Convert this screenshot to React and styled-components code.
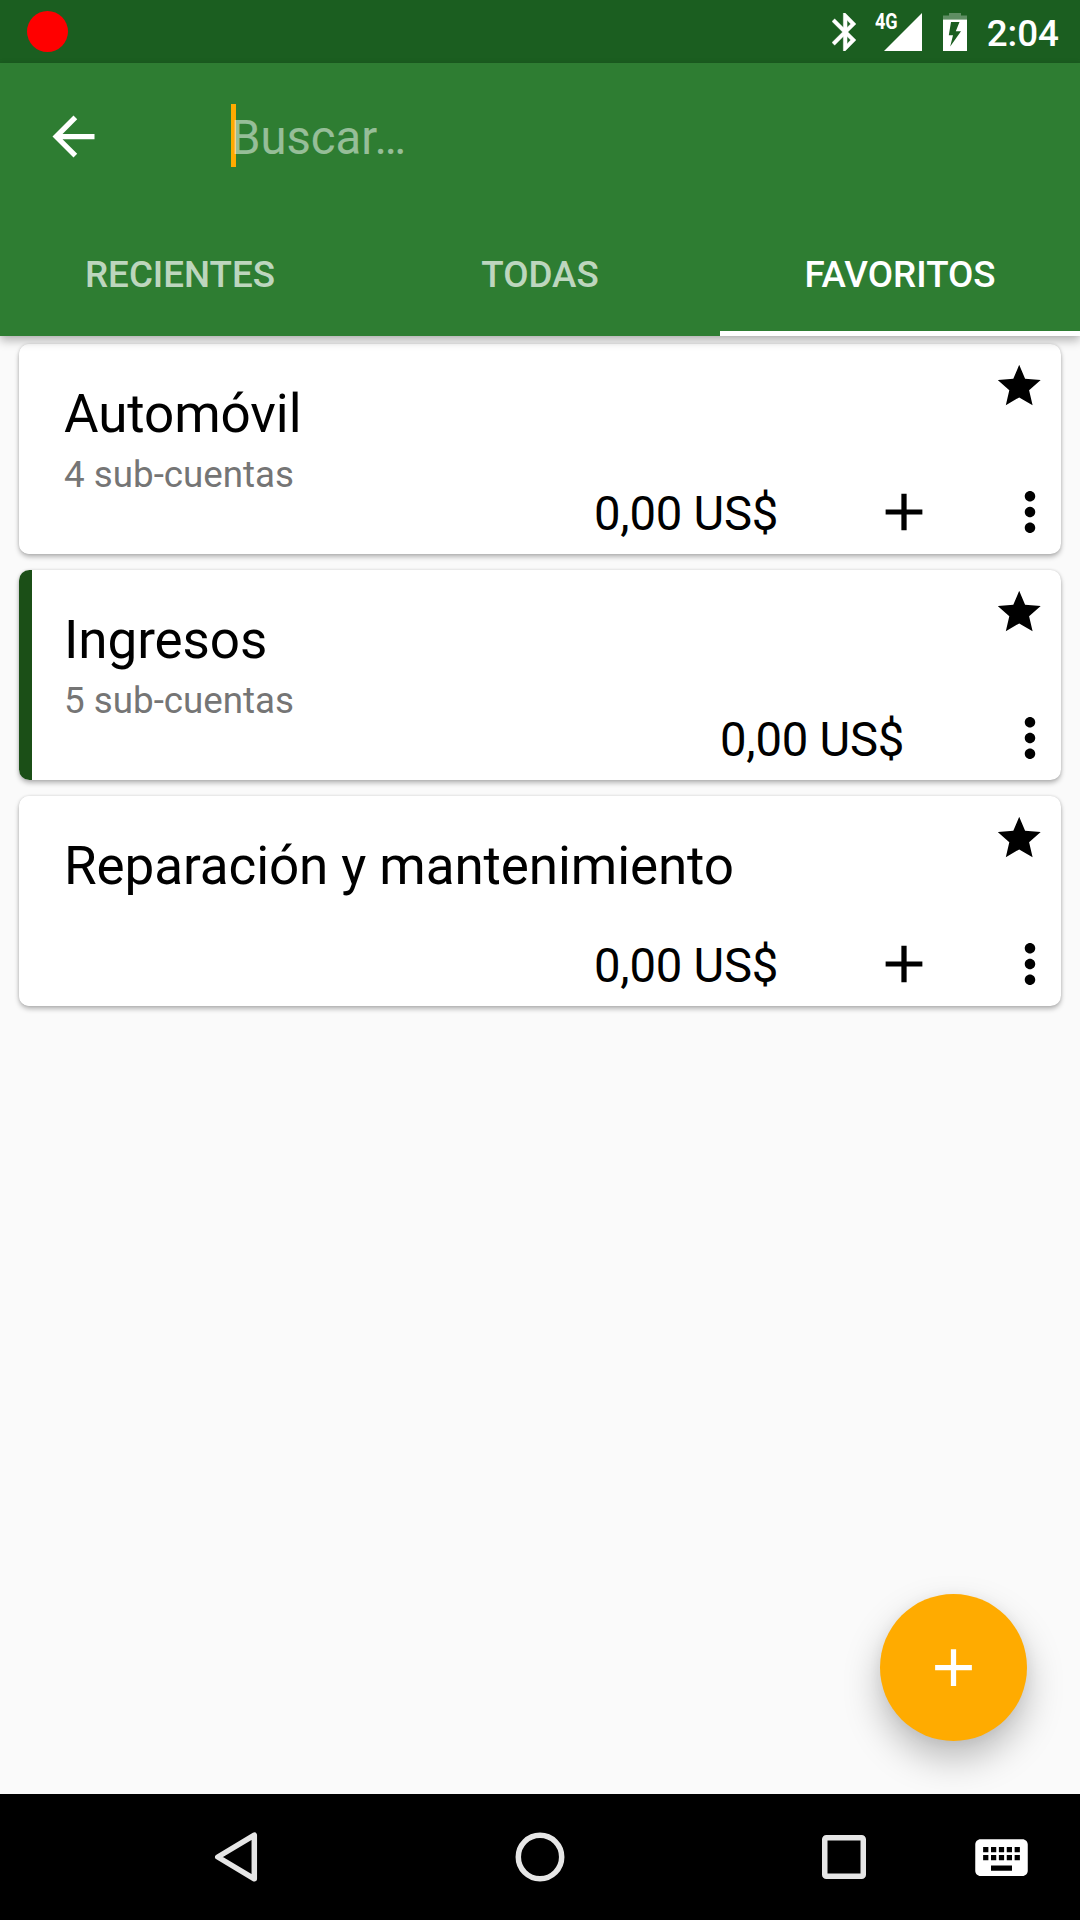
import React from "react";
import styled, { createGlobalStyle } from "styled-components";

const GlobalStyle = createGlobalStyle`
  * { box-sizing: border-box; }
  body { margin: 0; background: #fafafa; }
  svg { display: block; flex: none; }
  button { border: 0; padding: 0; background: none; color: inherit; font: inherit; }
`;

const Screen = styled.div`
  position: relative;
  display: flex;
  flex-direction: column;
  width: 1080px;
  height: 1920px;
  overflow: hidden;
  background: #fafafa;
  color: #000;
  font-family: Roboto, "Liberation Sans", sans-serif;
`;

const StatusBar = styled.div`
  display: flex;
  align-items: center;
  height: 63px;
  padding: 0 21px 0 27px;
  background: #1b5e20;
  color: #fff;
`;

const RecordDot = styled.div`
  width: 41px;
  height: 41px;
  margin-right: auto;
  border-radius: 50%;
  background: #f00;
`;

const Signal = styled.div`
  position: relative;
  margin: 1px 21px 0 28px;
`;

const NetworkLabel = styled.span`
  position: absolute;
  left: -9px;
  top: 0;
  font-size: 22px;
  font-weight: 700;
  line-height: 18px;
  transform: scaleX(0.82);
  transform-origin: left center;
`;

const Clock = styled.div`
  margin: 3px 0 0 20px;
  font-size: 36.75px;
  font-weight: 500;
  line-height: 43px;
`;

const AppBar = styled.header`
  position: relative;
  z-index: 1;
  height: 273px;
  background: #2e7d32;
  color: #fff;
  box-shadow: 0 5px 9px rgba(0, 0, 0, 0.26), 0 0 3px rgba(0, 0, 0, 0.08);
`;

const Toolbar = styled.div`
  display: flex;
  align-items: center;
  height: 147px;
  padding-left: 42px;
`;

const SearchField = styled.div`
  display: flex;
  align-items: center;
  margin-left: 126px;
`;

const Caret = styled.span`
  width: 5px;
  height: 63px;
  margin-bottom: 3px;
  background: #ffab00;
`;

const Placeholder = styled.span`
  margin-left: -5px;
  padding-top: 4px;
  color: rgba(255, 255, 255, 0.5);
  font-size: 47.25px;
  line-height: 55px;
`;

const Tabs = styled.nav`
  display: grid;
  grid-template-columns: repeat(3, 1fr);
  height: 126px;
`;

const Tab = styled.button`
  padding-top: 7px;
  border-bottom: 5px solid ${(p) => (p.$active ? "#fff" : "transparent")};
  color: ${(p) => (p.$active ? "#fff" : "rgba(255, 255, 255, 0.7)")};
  font-size: 36.75px;
  font-weight: 500;
  line-height: 43px;
`;

const AccountList = styled.main`
  display: flex;
  flex: 1;
  flex-direction: column;
  gap: 16px;
  padding: 8px 19px;
`;

const Card = styled.article`
  display: flex;
  height: 210px;
  overflow: hidden;
  border-radius: 10.5px;
  background: #fff;
  box-shadow: 0 3px 5px rgba(0, 0, 0, 0.27), 0 0 3px rgba(0, 0, 0, 0.14);
`;

const Stripe = styled.div`
  width: 13px;
  background: ${(p) => p.$color};
`;

const CardBody = styled.div`
  display: flex;
  flex: 1;
  flex-direction: column;
`;

const CardHead = styled.div`
  display: flex;
  justify-content: space-between;
  height: 152px;
  padding: 39px 20px 0 32px;
`;

const Title = styled.h2`
  margin: 0 0 8px;
  padding-top: 1px;
  font-size: 53px;
  font-weight: 400;
  letter-spacing: -0.1px;
  line-height: 61px;
`;

const Subtitle = styled.p`
  margin: 0;
  color: #757575;
  font-size: 36.75px;
  line-height: 43px;
`;

const StarButton = styled.button`
  align-self: flex-start;
  margin-top: -18px;
`;

const CardFoot = styled.div`
  display: flex;
  align-items: center;
  justify-content: flex-end;
  height: 58px;
  padding-bottom: 26px;
`;

const Amount = styled.div`
  margin: 4px 95px 0 0;
  font-size: 47.25px;
  letter-spacing: -0.25px;
  line-height: 55px;
`;

const AddButton = styled.button`
  margin-right: 64px;
`;

const Fab = styled.button`
  position: absolute;
  right: 53px;
  bottom: 179px;
  display: grid;
  place-items: center;
  width: 147px;
  height: 147px;
  border-radius: 50%;
  background: #ffab00;
  color: #fff;
  box-shadow: 0 18px 36px rgba(0, 0, 0, 0.25), 0 2px 14px rgba(0, 0, 0, 0.05);
`;

const NavBar = styled.footer`
  position: relative;
  display: flex;
  align-items: center;
  height: 126px;
  padding: 0 46px 0 212px;
  background: #000;
  color: #e6e6e6;
`;

const NavButton = styled.button`
  margin-right: ${(p) => p.$gap || 0}px;
  color: ${(p) => p.$color || "inherit"};
`;

const MaterialIcon = ({ d }) => (
  <svg width="63" height="63" viewBox="0 0 24 24" fill="currentColor">
    <path d={d} />
  </svg>
);

const CardIcon = ({ d }) => (
  <svg width="62" height="62" viewBox="0.19 0.19 23.62 23.62" fill="currentColor">
    <path d={d} />
  </svg>
);

const BACK = "M20 11H7.83l5.59-5.59L12 4l-8 8 8 8 1.41-1.41L7.83 13H20v-2z";
const PLUS = "M19 13h-6v6h-2v-6H5v-2h6V5h2v6h6v2z";
const MORE =
  "M12 8c1.1 0 2-.9 2-2s-.9-2-2-2-2 .9-2 2 .9 2 2 2zm0 2c-1.1 0-2 .9-2 2s.9 2 2 2 2-.9 2-2-.9-2-2-2zm0 6c-1.1 0-2 .9-2 2s.9 2 2 2 2-.9 2-2-.9-2-2-2z";
const KEYBOARD =
  "M20 5H4c-1.1 0-1.99.9-1.99 2L2 17c0 1.1.9 2 2 2h16c1.1 0 2-.9 2-2V7c0-1.1-.9-2-2-2zm-9 3h2v2h-2V8zm0 3h2v2h-2v-2zM8 8h2v2H8V8zm0 3h2v2H8v-2zm-1 2H5v-2h2v2zm0-3H5V8h2v2zm9 7H8v-2h8v2zm0-4h-2v-2h2v2zm0-3h-2V8h2v2zm3 3h-2v-2h2v2zm0-3h-2V8h2v2z";

const Bluetooth = () => (
  <svg width="24" height="38" viewBox="5 2 12.71 20" fill="currentColor" stroke="currentColor" strokeWidth="0.2">
    <path d="M17.71 7.71L12 2h-1v7.59L6.41 5 5 6.41 10.59 12 5 17.59 6.41 19 11 14.41V22h1l5.71-5.71-4.3-4.29 4.3-4.29zM13 5.83l1.88 1.88L13 9.59V5.83zm1.88 10.46L13 18.17v-3.76l1.88 1.88z" />
  </svg>
);

const SignalIcon = () => (
  <svg width="38" height="38" viewBox="0 0 38 38" fill="currentColor">
    <path d="M0 38 L38 0 V38 Z" />
  </svg>
);

const Battery = () => (
  <svg width="24" height="38" viewBox="0 0 24 38" fill="currentColor">
    <path d="M6 0 H18 V2.5 H24 V6.5 H0 V2.5 H6 Z" opacity="0.3" />
    <path fillRule="evenodd" d="M0 6.5 H24 V38 H0 Z M8 9 H16.5 L12.8 18.3 H18 L7.2 33.5 L10 22.3 H5.8 Z" />
  </svg>
);

const Star = () => (
  <svg width="43" height="41" viewBox="0.3 0.2 43 41" fill="currentColor">
    <path d="M21.5 0 L27.4 14 L43 15.3 L31.4 25.4 L34.9 40.5 L21.5 32.6 L8.1 40.5 L11.6 25.4 L0 15.3 L15.6 14 Z" />
  </svg>
);

const accounts = [
  { name: "Automóvil", detail: "4 sub-cuentas", amount: "0,00 US$", canAdd: true },
  { name: "Ingresos", detail: "5 sub-cuentas", amount: "0,00 US$", color: "#1b4f17" },
  { name: "Reparación y mantenimiento", amount: "0,00 US$", canAdd: true },
];

const AccountCard = ({ account }) => (
  <Card>
    <Stripe $color={account.color || "#fff"} />
    <CardBody>
      <CardHead>
        <div>
          <Title>{account.name}</Title>
          {account.detail && <Subtitle>{account.detail}</Subtitle>}
        </div>
        <StarButton aria-label="Favorito">
          <Star />
        </StarButton>
      </CardHead>
      <CardFoot>
        <Amount>{account.amount}</Amount>
        {account.canAdd && (
          <AddButton aria-label="Añadir">
            <CardIcon d={PLUS} />
          </AddButton>
        )}
        <button aria-label="Más opciones">
          <CardIcon d={MORE} />
        </button>
      </CardFoot>
    </CardBody>
  </Card>
);

export default function App() {
  return (
    <Screen>
      <GlobalStyle />
      <StatusBar>
        <RecordDot />
        <Bluetooth />
        <Signal>
          <SignalIcon />
          <NetworkLabel>4G</NetworkLabel>
        </Signal>
        <Battery />
        <Clock>2:04</Clock>
      </StatusBar>
      <AppBar>
        <Toolbar>
          <button aria-label="Atrás">
            <MaterialIcon d={BACK} />
          </button>
          <SearchField>
            <Caret />
            <Placeholder>Buscar…</Placeholder>
          </SearchField>
        </Toolbar>
        <Tabs>
          <Tab>RECIENTES</Tab>
          <Tab>TODAS</Tab>
          <Tab $active>FAVORITOS</Tab>
        </Tabs>
      </AppBar>
      <AccountList>
        {accounts.map((account) => (
          <AccountCard key={account.name} account={account} />
        ))}
      </AccountList>
      <Fab aria-label="Nueva cuenta">
        <MaterialIcon d={PLUS} />
      </Fab>
      <NavBar>
        <NavButton $gap={253} aria-label="Volver">
          <svg width="50" height="50" viewBox="0 0 50 50" fill="none" stroke="currentColor" strokeWidth="5.5" strokeLinejoin="round">
            <path d="M5.8 25 L42.3 3.2 V46.8 Z" />
          </svg>
        </NavButton>
        <NavButton $gap={257} aria-label="Inicio">
          <svg width="50" height="50" viewBox="0 0 50 50" fill="none" stroke="currentColor" strokeWidth="5.5">
            <circle cx="25" cy="25" r="21.7" />
          </svg>
        </NavButton>
        <NavButton $gap={104} aria-label="Recientes">
          <svg width="44" height="44" viewBox="0 0 44 44" fill="none" stroke="currentColor" strokeWidth="5.5">
            <rect x="2.75" y="2.75" width="38.5" height="38.5" rx="1.6" />
          </svg>
        </NavButton>
        <NavButton $color="#fff" aria-label="Teclado">
          <MaterialIcon d={KEYBOARD} />
        </NavButton>
      </NavBar>
    </Screen>
  );
}
